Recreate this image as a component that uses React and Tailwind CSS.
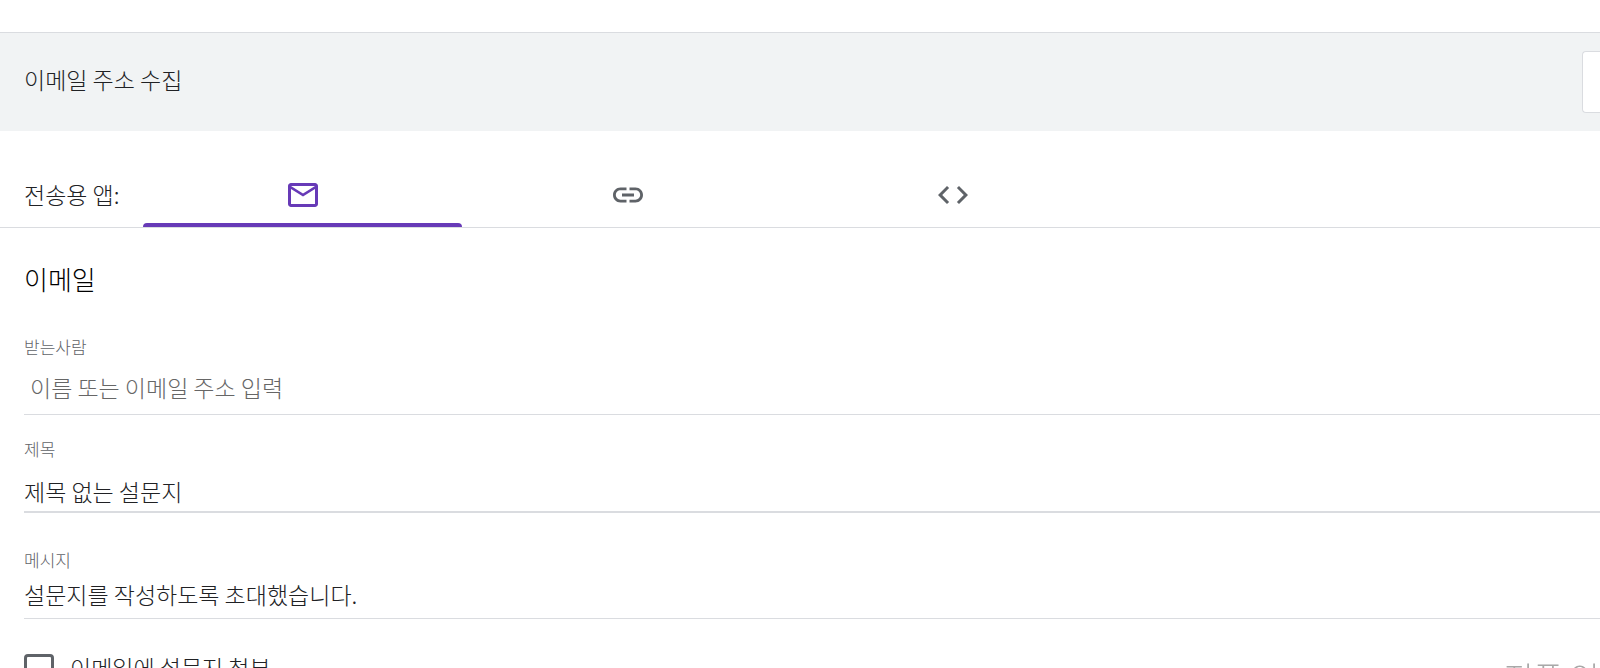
import React, { useState } from 'react';
import { MdOutlineEmail, MdLink, MdCode } from 'react-icons/md';

const TABS = [
  { id: 'email', label: '이메일로 보내기', Icon: MdOutlineEmail },
  { id: 'link', label: '링크로 보내기', Icon: MdLink },
  { id: 'embed', label: 'HTML 삽입', Icon: MdCode }
];

// --- COMPONENT: SEND METHOD TAB ---
const SendTab = ({ tab, active, onSelect }) => {
  const { Icon, label } = tab;
  return (
    <button
      type="button"
      role="tab"
      aria-label={label}
      aria-selected={active}
      onClick={onSelect}
      className={`flex h-16 w-[319px] shrink-0 flex-col items-center justify-between pt-3.5 ${
        active ? 'text-[#673ab7]' : 'text-[#5f6368]'
      }`}
    >
      <Icon size={36} />
      <span className={`h-1 w-full rounded-t-sm ${active ? 'bg-[#673ab7]' : 'bg-transparent'}`}></span>
    </button>
  );
};

export default function App() {
  const [tab, setTab] = useState('email');
  const [subject, setSubject] = useState('제목 없는 설문지');
  const [message, setMessage] = useState('설문지를 작성하도록 초대했습니다.');
  const [include, setInclude] = useState(false);

  return (
    <div className="h-screen overflow-hidden bg-white font-['Noto_Sans_CJK_KR',sans-serif] font-light text-[#202124]">

      {/* --- COLLECT EMAIL BAR --- */}
      <div className="mt-8 flex h-[99px] items-center justify-between border-t border-[#dadce0] bg-[#f1f3f4] pl-6">
        <span className="pb-1.5 text-[23px]">이메일 주소 수집</span>
        <button
          type="button"
          aria-label="이메일 주소 수집 옵션"
          className="h-[62px] w-[18px] rounded-l border border-r-0 border-[#dadce0] bg-white"
        ></button>
      </div>

      {/* --- SEND VIA TABS --- */}
      <div className="mt-8 flex h-[65px] items-stretch border-b border-[#dadce0] pl-6">
        <span className="w-[119px] shrink-0 self-center pb-0.5 text-[23px]">전송용 앱:</span>
        <div role="tablist" className="flex gap-1.5">
          {TABS.map((t) => (
            <SendTab key={t.id} tab={t} active={t.id === tab} onSelect={() => setTab(t.id)} />
          ))}
        </div>
      </div>

      {/* --- EMAIL FORM --- */}
      <form className="pl-6">
        <h2 className="mt-[31px] text-[26px] leading-10 text-black">이메일</h2>

        <label htmlFor="to" className="mt-9 block text-[17px] leading-6 text-[#5f6368]">받는사람</label>
        <input
          id="to"
          placeholder="이름 또는 이메일 주소 입력"
          className="mt-2 block h-12 w-full border-b border-[#dadce0] pb-2 pl-1.5 text-[23px] outline-none placeholder:text-[#666666]"
        />

        <label htmlFor="subject" className="mt-[22px] block text-[17px] leading-6 text-[#5f6368]">제목</label>
        <input
          id="subject"
          value={subject}
          onChange={(e) => setSubject(e.target.value)}
          className="mt-3 block h-10 w-full border-b-2 border-[#dadce0] pb-0.5 text-[23px] outline-none"
        />

        <label htmlFor="message" className="mt-[35px] block text-[17px] leading-6 text-[#5f6368]">메시지</label>
        <input
          id="message"
          value={message}
          onChange={(e) => setMessage(e.target.value)}
          className="mt-1 block h-[43px] w-full border-b border-[#dadce0] pb-1.5 text-[23px] outline-none"
        />

        <label className="mt-[31px] flex items-center gap-4 text-[23px]">
          <input
            type="checkbox"
            checked={include}
            onChange={(e) => setInclude(e.target.checked)}
            className="size-[30px] appearance-none rounded border-3 border-[#5f6368] checked:bg-[#673ab7]"
          />
          <span className="pb-1">이메일에 설문지 첨부</span>
        </label>
      </form>

      {/* --- DESKTOP ACTIVATION NOTICE --- */}
      <div className="pointer-events-none fixed top-full left-full -mt-3 -ml-24 text-[32px] leading-10 whitespace-nowrap text-[#a8a8a8]">
        정품 인증
      </div>
    </div>
  );
}
